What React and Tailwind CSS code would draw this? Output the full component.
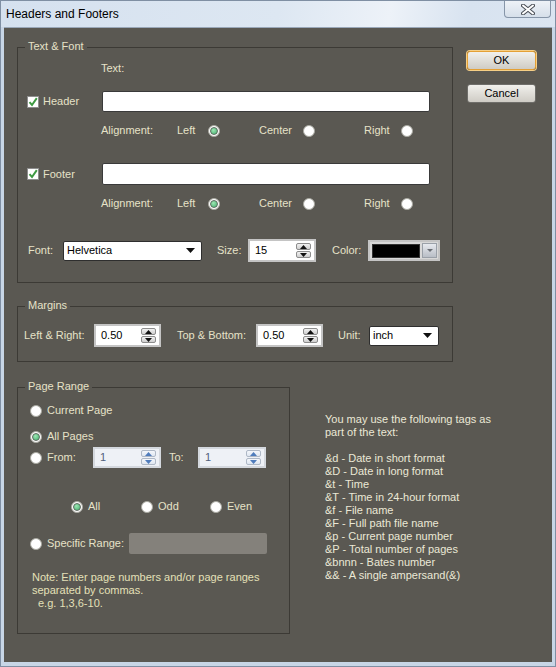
import React from "react";

const Radio = ({ checked }) => (
  <span className="flex-none w-[12px] h-[12px] rounded-full bg-white border border-[#a8a8a0] flex items-center justify-center">
    {checked && (
      <span className="w-[8px] h-[8px] rounded-full border border-[#5d6a5f] bg-[radial-gradient(circle_at_40%_35%,#9ee6b4,#3fae6a)]" />
    )}
  </span>
);

const Check = () => (
  <span className="flex-none w-[12px] h-[12px] bg-white border border-[#8e8e8e] flex items-center justify-center">
    <svg width="10" height="10" viewBox="0 0 10 10">
      <path d="M1.5 5.2 L4 8 L8.8 1.2" fill="none" stroke="#3f9a43" strokeWidth="2" />
    </svg>
  </span>
);

const SpinArrows = ({ disabled }) => {
  const c = disabled ? "#4f7cbc" : "#111";
  const box = disabled
    ? "bg-gradient-to-b from-[#f4f7fb] to-[#dfe6f0] border-[#aeb8c6]"
    : "bg-gradient-to-b from-[#f2f2f2] to-[#cfcfcf] border-[#8c8c8c]";
  return (
    <span className="flex flex-col gap-[1px] flex-none">
      <span className={`w-[15px] h-[7px] rounded-[2px] border flex items-center justify-center ${box}`}>
        <svg width="7" height="4" viewBox="0 0 7 4"><path d="M0 4 L3.5 0 L7 4Z" fill={c} /></svg>
      </span>
      <span className={`w-[15px] h-[7px] rounded-[2px] border flex items-center justify-center ${box}`}>
        <svg width="7" height="4" viewBox="0 0 7 4"><path d="M0 0 L3.5 4 L7 0Z" fill={c} /></svg>
      </span>
    </span>
  );
};

const Spin = ({ value, w, h, disabled }) => (
  <div
    className={`flex-none flex items-center justify-between pl-[5px] pr-[3px] border-2 ${
      disabled ? "bg-[#eef1f6] border-[#d4d8de] text-[#51607c]" : "bg-white border-[#c4c4c4] text-black"
    } ${w} ${h}`}
  >
    <span>{value}</span>
    <SpinArrows disabled={disabled} />
  </div>
);

const Select = ({ value, w }) => (
  <div className={`flex-none h-[20px] ${w} bg-white border border-[#2e2e2e] rounded-[2px] flex items-center justify-between pl-[3px] pr-[6px] text-black`}>
    <span>{value}</span>
    <svg width="9" height="5" viewBox="0 0 9 5"><path d="M0 0 L9 0 L4.5 5Z" fill="#111" /></svg>
  </div>
);

const Group = ({ label, className, children }) => (
  <div className={`relative border border-[#3c3a35] ${className}`}>
    <span className="absolute -top-[8px] left-[7px] px-[3px] bg-[#5a5852] leading-[13px]">{label}</span>
    {children}
  </div>
);

const tags = [
  "&d - Date in short format",
  "&D - Date in long format",
  "&t - Time",
  "&T - Time in 24-hour format",
  "&f - File name",
  "&F - Full path file name",
  "&p - Current page number",
  "&P - Total number of pages",
  "&bnnn - Bates number",
  "&& - A single ampersand(&)",
];

const AlignRow = () => (
  <div className="mt-[12px] h-[13px] pl-[83px] flex items-center">
    <span className="w-[76px]">Alignment:</span>
    <span className="w-[31px]">Left</span>
    <Radio checked />
    <span className="ml-[39px] w-[44px]">Center</span>
    <Radio />
    <span className="ml-[49px] w-[37px]">Right</span>
    <Radio />
  </div>
);

export default function App() {
  return (
    <div className="w-[556px] h-[667px] flex flex-col bg-[#c8d6e6] border border-[#7f8fa3] font-['Liberation_Sans',Arial,sans-serif] text-[11px] leading-[13px] text-[#e6e2c8]">
      <div className="h-[26px] flex items-start bg-[linear-gradient(100deg,#d5e1ef_0%,#dde7f2_50%,#edf2f8_70%,#d8e3f0_84%,#dbe5f1_100%)]">
        <span className="self-center ml-[5px] text-[12px] text-black">Headers and Footers</span>
        <div className="ml-auto mr-[4px] w-[47px] h-[17px] rounded-b-[4px] border border-t-0 border-[#8695a8] bg-gradient-to-b from-[#eef2f7] to-[#d6dfea] flex items-center justify-center">
          <svg width="14" height="11" viewBox="0 0 14 11">
            <path d="M2 1.5 L12 9.5 M12 1.5 L2 9.5" stroke="#4a4f57" strokeWidth="4" strokeLinecap="round" />
            <path d="M2 1.5 L12 9.5 M12 1.5 L2 9.5" stroke="#ffffff" strokeWidth="2" strokeLinecap="round" />
          </svg>
        </div>
      </div>

      <div className="mx-[3px] mb-[4px] flex-1 bg-[#5a5852] border-t border-[#9aa8b9] flex pl-[13px] pt-[19px]">
        <div className="w-[436px] flex-none flex flex-col">
          <Group label="Text & Font" className="h-[236px]">
            <div className="mt-[14px] h-[13px] pl-[83px]">Text:</div>
            <div className="mt-[16px] h-[21px] flex items-center">
              <div className="w-[84px] flex items-center pl-[9px] gap-[4px]">
                <Check />
                <span>Header</span>
              </div>
              <div className="w-[328px] h-[21px] bg-white rounded-[2px] border border-[#3a3a3a]" />
            </div>
            <AlignRow />
            <div className="mt-[26px] h-[22px] flex items-center">
              <div className="w-[84px] flex items-center pl-[9px] gap-[4px]">
                <Check />
                <span>Footer</span>
              </div>
              <div className="w-[328px] h-[22px] bg-white rounded-[2px] border border-[#3a3a3a]" />
            </div>
            <AlignRow />
            <div className="mt-[29px] h-[23px] flex items-center pl-[10px]">
              <span className="w-[35px]">Font:</span>
              <Select value="Helvetica" w="w-[139px]" />
              <span className="ml-[15px] w-[31px]">Size:</span>
              <Spin value="15" w="w-[68px]" h="h-[23px]" />
              <span className="ml-[16px] w-[36px]">Color:</span>
              <div className="flex-none w-[72px] h-[21px] border-2 border-[#c4c4c4] bg-[#d8d8d8] flex items-center">
                <span className="ml-[2px] w-[48px] h-[14px] bg-black border border-[#333]" />
                <span className="ml-[2px] w-[15px] h-[15px] bg-gradient-to-b from-[#e6e9ee] to-[#b9bec6] border border-[#9aa0a8] flex items-center justify-center">
                  <svg width="6" height="3" viewBox="0 0 6 3"><path d="M0 0 L6 0 L3 3Z" fill="#6a6e74" /></svg>
                </span>
              </div>
            </div>
          </Group>

          <Group label="Margins" className="mt-[23px] h-[56px]">
            <div className="mt-[17px] h-[23px] flex items-center pl-[6px]">
              <span className="w-[70px]">Left &amp; Right:</span>
              <Spin value="0.50" w="w-[67px]" h="h-[23px]" />
              <span className="ml-[16px] w-[79px]">Top &amp; Bottom:</span>
              <Spin value="0.50" w="w-[67px]" h="h-[23px]" />
              <span className="ml-[15px] w-[31px]">Unit:</span>
              <Select value="inch" w="w-[70px]" />
            </div>
          </Group>

          <div className="mt-[25px] flex">
            <Group label="Page Range" className="w-[273px] h-[247px] flex-none">
              <div className="mt-[12px] h-[21px] flex items-center pl-[12px]">
                <Radio />
                <span className="ml-[5px]">Current Page</span>
              </div>
              <div className="mt-[5px] h-[21px] flex items-center pl-[12px]">
                <Radio checked />
                <span className="ml-[5px]">All Pages</span>
              </div>
              <div className="h-[21px] flex items-center pl-[12px]">
                <Radio />
                <span className="ml-[5px] w-[46px]">From:</span>
                <Spin value="1" w="w-[68px]" h="h-[21px]" disabled />
                <span className="ml-[8px] w-[29px]">To:</span>
                <Spin value="1" w="w-[68px]" h="h-[21px]" disabled />
              </div>
              <div className="mt-[28px] h-[21px] flex items-center pl-[53px]">
                <div className="w-[70px] flex items-center">
                  <Radio checked />
                  <span className="ml-[5px]">All</span>
                </div>
                <div className="w-[69px] flex items-center">
                  <Radio />
                  <span className="ml-[5px]">Odd</span>
                </div>
                <div className="flex items-center">
                  <Radio />
                  <span className="ml-[5px]">Even</span>
                </div>
              </div>
              <div className="mt-[16px] h-[21px] flex items-center pl-[12px]">
                <Radio />
                <span className="ml-[5px] w-[82px]">Specific Range:</span>
                <div className="w-[138px] h-[21px] rounded-[2px] bg-[#84817b]" />
              </div>
              <div className="mt-[17px] pl-[14px] text-[#e4e0b8]">
                <div>Note: Enter page numbers and/or page ranges</div>
                <div>separated by commas.</div>
                <div className="pl-[6px]">e.g. 1,3,6-10.</div>
              </div>
            </Group>
            <div className="ml-[35px] mt-[26px] whitespace-nowrap text-[#ebe8d6]">
              <div>You may use the following tags as</div>
              <div>part of the text:</div>
              <div className="h-[13px]" />
              {tags.map((t) => (
                <div key={t}>{t}</div>
              ))}
            </div>
          </div>
        </div>

        <div className="ml-[14px] pt-[4px] flex flex-col">
          <button className="w-[69px] h-[19px] rounded-[3px] border border-[#e4a035] shadow-[0_0_0_1px_#f6cf86] bg-gradient-to-b from-[#f1f0ec] to-[#cfccc5] text-black text-[11px] leading-[13px]">
            OK
          </button>
          <button className="mt-[14px] w-[69px] h-[19px] rounded-[3px] border border-[#6f6e6a] bg-gradient-to-b from-[#f1f0ec] to-[#cfccc5] text-black text-[11px] leading-[13px]">
            Cancel
          </button>
        </div>
      </div>
    </div>
  );
}
